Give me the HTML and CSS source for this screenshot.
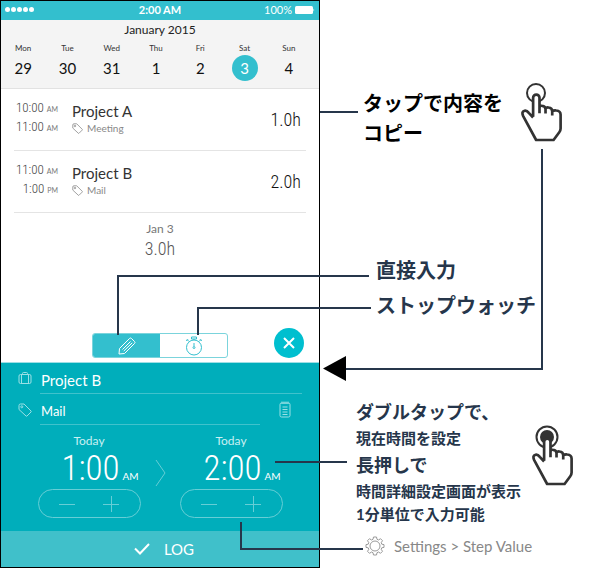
FILE: index.html
```html
<!DOCTYPE html>
<html lang="ja">
<head>
<meta charset="utf-8">
<meta name="viewport" content="width=device-width, initial-scale=1">
<title>Time log guide</title>
<link rel="stylesheet" href="styles.css">
</head>
<body>
<svg class="defs" aria-hidden="true">
  <symbol id="tag" viewBox="0 0 14 14"><path d="M1 2.5Q1 1 2.5 1H6L13 8Q13.5 8.500 13 9L9 13Q8.500 13.500 8 13L1 6.500Z"/><circle cx="3.800" cy="3.800" r="1"/></symbol>
  <symbol id="hand" viewBox="33 24 122 176"><path d="M69 125V68a9.500 9.500 0 0 1 19 0V114M88 97Q89 91 96 92Q106 93 106 102V115M106 101Q108 96 115 97Q126 98 126 108V121M126 109Q130 105 138 106Q151 107 151 119V160Q151 166 147 171L130 194H78L39 122Q34 109 43 107Q50 105 56 113L69 127"/></symbol>
</svg>
<main class="guide">
  <section class="phone">
    <header class="status">
      <span class="signal"><i></i><i></i><i></i><i></i><i></i></span>
      <strong>2:00 AM</strong>
      <span class="power">100%
        <svg width="20" height="8" viewBox="0 0 20 8"><rect width="18" height="8" rx="1.500" fill="#fff"/><path d="M18.500 2.500Q20 4 18.500 5.500Z" fill="#fff"/></svg>
      </span>
    </header>
    <div class="calendar">
      <h1>January 2015</h1>
      <ol class="week">
        <li>Mon<b>29</b></li><li>Tue<b>30</b></li><li>Wed<b>31</b></li><li>Thu<b>1</b></li><li>Fri<b>2</b></li><li>Sat<b class="chosen">3</b></li><li>Sun<b>4</b></li>
      </ol>
    </div>
    <ul class="entries">
      <li>
        <div class="span"><span>10:00 <small>AM</small></span><span>11:00 <small>AM</small></span></div>
        <div class="what"><h2>Project A</h2><p><svg class="line-icon" width="11" height="11"><use href="#tag"/></svg>Meeting</p></div>
        <span class="hours">1.0h</span>
      </li>
      <li>
        <div class="span"><span>11:00 <small>AM</small></span><span>1:00 <small>PM</small></span></div>
        <div class="what"><h2>Project B</h2><p><svg class="line-icon" width="11" height="11"><use href="#tag"/></svg>Mail</p></div>
        <span class="hours">2.0h</span>
      </li>
    </ul>
    <div class="total">Jan 3<span>3.0h</span></div>
    <div class="modes">
      <div class="segments">
        <button class="on" type="button" aria-label="直接入力"><svg width="18" height="18" viewBox="0 0 18 18"><path d="M1 17L1.500 11.500L11.500 1.500Q12.500 .5 13.500 1.500L16.500 4.500Q17.500 5.500 16.500 6.500L6.500 16.500ZM4.500 12.500L12.500 4.500M5.800 14L14.200 5.800"/></svg></button>
        <button type="button" aria-label="ストップウォッチ"><svg width="18" height="20" viewBox="0 0 18 20"><circle cx="9" cy="11.500" r="7.500"/><path d="M6.500 1H11.500V3H6.500ZM9 3V4M9 7V10M2 3.500L4 5.500M1.200 5L3 3.200M16 3.500L14 5.500M16.800 5L15 3.200"/><circle cx="9" cy="11.500" r="1"/></svg></button>
      </div>
      <button class="close" type="button" aria-label="閉じる"><svg width="12" height="12" viewBox="0 0 12 12"><path d="M1 1L11 11M11 1L1 11"/></svg></button>
    </div>
    <form class="editor">
      <label class="field"><svg class="line-icon" width="13" height="13" viewBox="0 0 13 13"><rect x=".5" y="2.500" width="12" height="9" rx="1.500"/><path d="M4 2.500V1.500Q4 .5 5 .5H8Q9 .5 9 1.500V2.500M3 2.500V11.500M10 2.500V11.500"/></svg><input class="project" aria-label="Project" value="Project B"></label>
      <div class="field"><svg class="line-icon" width="14" height="14"><use href="#tag"/></svg><input aria-label="Tag" value="Mail"><button class="memo" type="button" aria-label="メモ"><svg width="12" height="17" viewBox="0 0 12 17"><rect x="1" y="2" width="10" height="14" rx="1.500"/><path d="M3 .5V3M5 .5V3M7 .5V3M9 .5V3M3.500 6H8.500M3.500 8.500H8.500M3.500 11H8.500M3.500 13.500H8.500"/></svg></button></div>
      <div class="times">
        <div class="time"><span>Today</span><div class="clock">1:00<small>AM</small></div><div class="stepper"><button type="button" aria-label="減らす"><svg width="16" height="16"><path d="M0 8.500H16"/></svg></button><button type="button" aria-label="増やす"><svg width="16" height="16"><path d="M0 8.500H16M8.500 0V16"/></svg></button></div></div>
        <svg class="arrow" width="11" height="28" viewBox="0 0 11 28"><path d="M1 1L10 14L1 27"/></svg>
        <div class="time"><span>Today</span><div class="clock">2:00<small>AM</small></div><div class="stepper"><button type="button" aria-label="減らす"><svg width="16" height="16"><path d="M0 8.500H16"/></svg></button><button type="button" aria-label="増やす"><svg width="16" height="16"><path d="M0 8.500H16M8.500 0V16"/></svg></button></div></div>
      </div>
      <button class="log" type="submit"><svg width="16" height="12" viewBox="0 0 16 12"><path d="M1 5.500L6 10.500L15 1"/></svg>LOG</button>
    </form>
  </section>
  <section class="notes">
    <div class="note copy"><p>タップで内容を<br>コピー</p>
      <svg class="hand" width="41" height="59"><circle cx="15" cy="10" r="9"/><use href="#hand"/></svg></div>
    <div class="note input"><p>直接入力</p><p>ストップウォッチ</p></div>
    <div class="note press"><div><h3>ダブルタップで、</h3><p>現在時間を設定</p><h3>長押しで</h3><p>時間詳細設定画面が表示<br>1分単位で入力可能</p></div>
      <svg class="hand" width="41" height="61" viewBox="0 -2 41 61"><circle cx="15" cy="10" r="10.500"/><circle class="dot" cx="15" cy="10" r="7"/><use href="#hand" width="41" height="59"/></svg></div>
    <div class="note settings"><svg width="20" height="20" viewBox="0 0 20 20"><circle cx="10" cy="10" r="5"/><path d="M8.500 1H11.500L12 3.300L13.500 4L15.500 2.700L17.500 4.700L16.200 6.700L16.800 8.200L19 8.600V11.400L16.800 11.800L16.200 13.300L17.500 15.300L15.500 17.300L13.500 16L12 16.700L11.500 19H8.500L8 16.700L6.500 16L4.500 17.300L2.500 15.300L3.800 13.300L3.200 11.800L1 11.400V8.600L3.200 8.200L3.800 6.700L2.500 4.700L4.500 2.700L6.500 4L8 3.300Z"/></svg>Settings &gt; Step Value</div>
  </section>
  <svg class="leaders" width="600" height="569" viewBox="0 0 600 569" aria-hidden="true">
    <path d="M320 112H358M542 149V369H346M118 335V276H369M198 335V308H371M275 462H347M241 522V549H363"/>
    <path class="head" d="M323 368.500L346 356V381Z"/>
  </svg>
</main>
</body>
</html>
```
FILE: styles.css
```css
* { box-sizing: border-box; }
body { margin: 0; background: #fff; font-family: Lato, "Noto Sans CJK JP", sans-serif; color: #26364b; }
h1, h2, h3, p, ul, ol { margin: 0; padding: 0; font-weight: inherit; list-style: none; }
button { padding: 0; border: 0; background: none; color: inherit; font: inherit; }
svg { fill: none; flex: none; }
.defs { position: absolute; width: 0; height: 0; }
.guide { position: relative; display: flex; align-items: flex-start; }
.phone { flex: 0 0 320px; border: 1px solid #000; color: #333; }
.status { display: grid; grid-template-columns: 1fr auto 1fr; align-items: center; height: 19px; padding: 0 4px 2px; background: #33bfce; color: #fff; font-size: 11px; }
.signal { display: flex; gap: 1px; }
.signal i { width: 5px; height: 5px; border-radius: 50%; background: #fff; }
.power { display: flex; align-items: center; justify-content: flex-end; gap: 3px; }
.calendar { height: 69px; padding-top: 2px; background: #f4f4f4; border-bottom: 1px solid #e2e2e2; text-align: center; }
.calendar h1 { font-size: 12px; line-height: 16px; color: #222; }
.week { display: grid; grid-template-columns: repeat(7, 1fr); margin-top: 4px; padding-right: 8px; font-size: 8px; line-height: 12px; }
.week b { display: block; width: 26px; margin: 1px auto 0; border-radius: 50%; font-size: 15px; line-height: 26px; font-weight: 400; color: #111; }
.week .chosen { background: #33bfce; color: #fff; }
.entries { padding: 0 13px; }
.entries li { display: flex; height: 62px; padding: 10px 5px 0 0; border-bottom: 1px solid #e4e4e4; }
.span { width: 44px; font-family: "Roboto Condensed", "Liberation Sans Narrow", Lato, sans-serif; font-size: 13px; font-weight: 300; line-height: 18px; color: #444; text-align: right; }
.span span { display: block; white-space: nowrap; }
.span small { font-family: Lato, sans-serif; font-size: 7px; font-weight: 400; color: #777; }
.what { flex: 1; padding: 3px 0 0 14px; }
.what h2 { font-size: 15px; line-height: 19px; }
.what p { display: flex; align-items: center; gap: 4px; font-size: 10px; line-height: 15px; color: #888; }
.line-icon { stroke: currentColor; }
.hours, .total span, .clock { font-family: "Roboto Condensed", "Liberation Sans Narrow", Lato, sans-serif; font-weight: 300; }
.hours { font-size: 18px; line-height: 41px; color: #111; }
.total { padding-top: 7px; font-size: 12px; line-height: 17px; text-align: center; color: #777; }
.total span { display: block; font-size: 18px; line-height: 24px; color: #555; }
.modes { display: grid; grid-template-columns: 1fr 136px 1fr; align-items: end; height: 102px; padding-bottom: 4px; border-bottom: 1px solid #9edfe5; }
.segments { grid-column: 2; display: flex; height: 25px; overflow: hidden; border: 1px solid #7bd4dc; border-radius: 3px; }
.segments button { flex: 1; display: grid; place-items: center; stroke: #33bfce; }
.segments .on { background: #33bfce; stroke: #fff; }
.close { display: grid; place-items: center; justify-self: end; width: 30px; height: 30px; margin-right: 15px; border-radius: 50%; background: #00bfcf; stroke: #fff; stroke-width: 2; }
.editor { background: #00aebb; color: #fff; }
.field { display: flex; align-items: center; height: 31px; padding: 0 17px; }
.field .line-icon { width: 14px; margin-right: 8px; stroke: #9be0e5; }
.field input { flex: 1; min-width: 0; height: 31px; padding: 4px 1px 0; border: 0; border-bottom: 1px solid #40c2cc; border-radius: 0; background: none; color: #fff; font: 13px Lato, sans-serif; }
.field .project { font-size: 15px; }
.memo { width: 42px; height: 20px; padding-left: 8px; stroke: #9be0e5; }
.memo svg { display: block; margin: auto; }
.times { display: flex; justify-content: center; gap: 14px; padding: 8px 0 13px; }
.time { width: 103px; text-align: center; }
.time > span { display: block; font-size: 12px; line-height: 15px; color: #c9f0f3; }
.clock { padding-left: 22px; font-size: 35px; line-height: 41px; color: #fff; white-space: nowrap; }
.clock small { margin-left: 3px; font: 10px Lato, sans-serif; }
.stepper { display: flex; height: 29px; padding: 0 7px; border: 1px solid #66ced6; border-radius: 15px; }
.stepper button { flex: 1; display: grid; place-items: center; stroke: #66ced6; }
.arrow { margin-top: 26px; stroke: #66ced6; }
.log { display: flex; align-items: center; justify-content: center; gap: 14px; width: 100%; height: 36px; padding-left: 8px; background: #40c0ca; font-size: 15px; stroke: #fff; stroke-width: 2; }
.notes { flex: 1; min-width: 0; font-weight: 700; white-space: nowrap; }
.note { display: flex; }
.copy { justify-content: space-between; padding: 83px 38px 0 43px; }
.copy p { padding-top: 5px; font-size: 20px; line-height: 30px; color: #000; }
.hand { stroke: #333; stroke-width: 2; overflow: visible; }
.hand use { fill: #fff; stroke-width: 8; stroke-linejoin: round; }
.hand .dot { fill: #333; stroke: none; }
.input { flex-direction: column; gap: 5px; padding: 107px 0 0 56px; font-size: 20px; line-height: 30px; }
.press { justify-content: space-between; padding: 77px 27px 0 36px; }
.press h3 { font-size: 18px; line-height: 30px; font-weight: 700; }
.press p { font-size: 15px; line-height: 23px; }
.press .hand { margin: 28px 0 0 -20px; }
.settings { align-items: center; gap: 9px; padding: 8px 0 0 45px; font-size: 15px; line-height: 24px; font-weight: 400; color: #888; stroke: #999; }
.leaders { position: absolute; top: 0; left: 0; pointer-events: none; stroke: #26364b; stroke-width: 2; }
.leaders .head { fill: #000; stroke: none; }
```
